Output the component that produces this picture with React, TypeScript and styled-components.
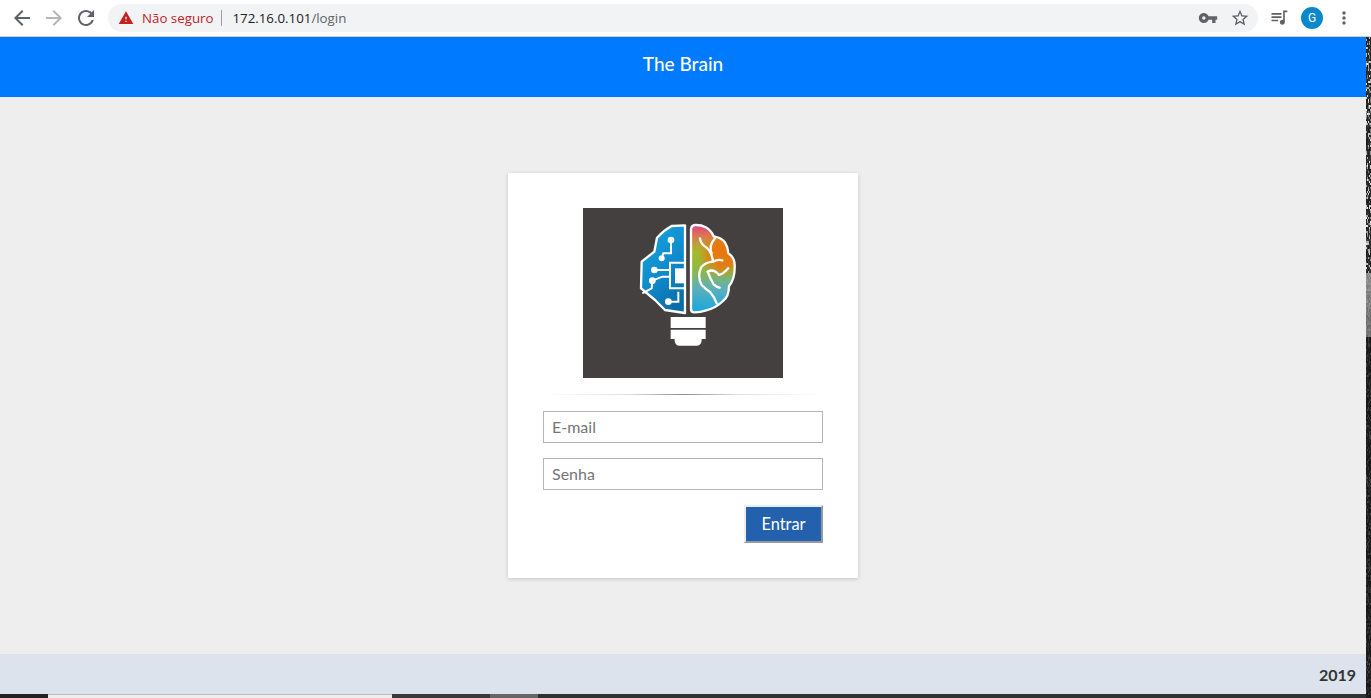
import React from "react";
import styled, { createGlobalStyle } from "styled-components";

const Global = createGlobalStyle`
  html, body { margin: 0; padding: 0; height: 100%; background: #fff; overflow: hidden; }
  * { box-sizing: border-box; }
`;

const Screen = styled.div`
  width: 1371px;
  height: 698px;
  display: flex;
  flex-direction: column;
  overflow: hidden;
  font-family: Lato, "Liberation Sans", sans-serif;
`;

const Toolbar = styled.header`
  height: 37px;
  flex: none;
  display: flex;
  align-items: center;
  background: #fff;
  border-bottom: 1px solid #d0d0d0;
  padding: 0 0 1px 10px;
`;

const NavButton = styled.span<{ $muted?: boolean }>`
  width: 24px;
  height: 24px;
  margin-right: 8px;
  flex: none;
  display: flex;
  color: ${(p) => (p.$muted ? "#b4b6b8" : "#5f6368")};
`;

const Omnibox = styled.div`
  width: 1150px;
  height: 28px;
  margin-left: 2px;
  border-radius: 14px;
  background: #f1f3f4;
  display: flex;
  align-items: center;
  padding: 0 8px 0 10px;
  font-family: "Open Sans", "Noto Sans", sans-serif;
  font-size: 13.3px;
`;

const WarningMark = styled.span`
  width: 16px;
  height: 16px;
  flex: none;
  display: flex;
  color: #c5221f;
`;

const SecurityLabel = styled.span`
  margin-left: 8px;
  color: #c5221f;
`;

const Separator = styled.span`
  width: 1px;
  height: 16px;
  margin: 0 10px 0 8px;
  background: #9aa0a6;
`;

const Url = styled.span`
  color: #5f6368;
  b { font-weight: 400; color: #202124; }
`;

const OmniActions = styled.div`
  margin-left: auto;
  display: flex;
  gap: 12px;
`;

const SmallIcon = styled.span`
  width: 20px;
  height: 20px;
  display: flex;
  color: #5f6368;
`;

const ToolbarEnd = styled.div`
  display: flex;
  align-items: center;
  margin-left: 11px;
`;

const Avatar = styled.span`
  width: 22px;
  height: 22px;
  margin-left: 12px;
  border-radius: 50%;
  background: #0b87cb;
  color: #fff;
  font: 400 12px Roboto, sans-serif;
  display: flex;
  align-items: center;
  justify-content: center;
`;

const Kebab = styled.span`
  width: 20px;
  height: 20px;
  margin-left: 11px;
  display: flex;
  color: #5f6368;
`;

const Viewport = styled.div`
  flex: 1;
  min-height: 0;
  display: flex;
`;

const Page = styled.div`
  width: 1366px;
  flex: none;
  display: flex;
  flex-direction: column;
`;

const Banner = styled.div`
  height: 60px;
  flex: none;
  background: #007bff;
  color: #fff;
  font-size: 19px;
  font-weight: 500;
  display: flex;
  align-items: center;
  justify-content: center;
  padding-bottom: 7px;
`;

const Main = styled.main`
  flex: 1;
  background: #eee;
  display: flex;
  justify-content: center;
  padding-top: 76px;
`;

const Card = styled.form`
  width: 350px;
  height: 405px;
  background: #fff;
  box-shadow: 0 1px 4px rgba(0, 0, 0, 0.18);
  padding: 35px;
  display: flex;
  flex-direction: column;
  align-items: center;
`;

const LogoSvg = styled.svg`
  display: block;
  flex: none;
  width: 200px;
  height: 170px;
  background: #444040;
`;

const Rule = styled.div`
  width: 280px;
  height: 1px;
  flex: none;
  margin: 16px 0;
  background: linear-gradient(to right, rgba(0,0,0,0) 1%, rgba(0,0,0,0.12) 30%, rgba(0,0,0,0.45) 50%, rgba(0,0,0,0.12) 70%, rgba(0,0,0,0) 99%);
`;

const Field = styled.input`
  width: 280px;
  height: 32px;
  flex: none;
  margin-bottom: 15px;
  padding: 0 8px 2px;
  border: 1px solid #b5b5b5;
  border-radius: 0;
  outline: none;
  background: #fff;
  color: #333;
  font: 400 16px Lato, sans-serif;
  &::placeholder { color: #757575; opacity: 1; }
`;

const Actions = styled.div`
  width: 280px;
  display: flex;
  justify-content: flex-end;
`;

const Submit = styled.button`
  width: 79px;
  height: 38px;
  padding: 0 0 2px;
  background: #2360ad;
  color: #fff;
  font: 400 16.4px Lato, sans-serif;
  border: 2px solid;
  border-color: #eeeeee #999999 #999999 #eeeeee;
`;

const Footer = styled.footer`
  height: 40px;
  flex: none;
  background: #dce3ec;
  color: #333;
  font-size: 16px;
  font-weight: 700;
  display: flex;
  align-items: center;
  justify-content: flex-end;
  padding-right: 10px;
`;

const Taskbar = styled.div`
  height: 4px;
  flex: none;
  display: flex;
  background: #2f3132;
`;

const TaskSlot = styled.span<{ $w: number; $bg: string; $edge?: boolean }>`
  width: ${(p) => p.$w}px;
  flex: none;
  background: ${(p) => p.$bg};
  border-top: ${(p) => (p.$edge ? "1px solid #bbb" : "none")};
`;

const Wallpaper = styled.svg`
  width: 5px;
  flex: none;
  display: block;
  background: #1c1c1c;
`;

const Icon = ({ d }: { d: string }) => (
  <svg viewBox="0 0 24 24" width="100%" height="100%" fill="currentColor"><path d={d} /></svg>
);

const ARROW = "M20 11H7.83l5.59-5.59L12 4l-8 8 8 8 1.41-1.41L7.83 13H20v-2z";
const ARROW_F = "M4 11h12.17l-5.59-5.59L12 4l8 8-8 8-1.41-1.41L16.17 13H4v-2z";
const RELOAD = "M17.65 6.35C16.2 4.9 14.21 4 12 4c-4.42 0-7.99 3.58-7.99 8s3.57 8 7.99 8c3.73 0 6.84-2.55 7.73-6h-2.08c-.82 2.33-3.04 4-5.65 4-3.31 0-6-2.69-6-6s2.69-6 6-6c1.66 0 3.14.69 4.22 1.78L13 11h7V4l-2.35 2.35z";
const WARN = "M1 21h22L12 2 1 21zm12-3h-2v-2h2v2zm0-4h-2v-4h2v4z";
const KEY = "M12.65 10C11.83 7.67 9.61 6 7 6c-3.31 0-6 2.69-6 6s2.69 6 6 6c2.61 0 4.83-1.67 5.65-4H17v4h4v-4h2v-4H12.65zM7 14c-1.1 0-2-.9-2-2s.9-2 2-2 2 .9 2 2-.9 2-2 2z";
const STAR = "M22 9.24l-7.19-.62L12 2 9.19 8.63 2 9.24l5.46 4.73L5.82 21 12 17.27 18.18 21l-1.63-7.03L22 9.24zM12 15.4l-3.76 2.27 1-4.28-3.32-2.88 4.38-.38L12 6.1l1.71 4.04 4.38.38-3.32 2.88 1 4.28L12 15.4z";
const QUEUE = "M15 6H3v2h12V6zm0 4H3v2h12v-2zM3 16h8v-2H3v2zM17 3v11.18c-.31-.11-.65-.18-1-.18-1.66 0-3 1.34-3 3s1.34 3 3 3 3-1.34 3-3V5h3V3h-5z";
const DOTS = "M12 8c1.1 0 2-.9 2-2s-.9-2-2-2-2 .9-2 2 .9 2 2 2zm0 2c-1.1 0-2 .9-2 2s.9 2 2 2 2-.9 2-2-.9-2-2-2zm0 6c-1.1 0-2 .9-2 2s.9 2 2 2 2-.9 2-2-.9-2-2-2z";

const RIGHT_LOBE = "M204 42 Q206 30 218 30 Q236 30 248 37 Q264 46 272 64 Q296 68 306 82 Q316 98 316 115 Q334 126 335 150 Q337 190 318 214 Q318 245 300 258 Q280 278 250 286 Q232 292 214 292 Q204 292 204 282 Z";

const Logo = () => (
  <LogoSvg viewBox="0 0 200 170">
    <defs>
      <linearGradient id="lb" x1="0.2" y1="0" x2="0.7" y2="1">
        <stop offset="0" stopColor="#18a3de" />
        <stop offset="0.55" stopColor="#0f8acb" />
        <stop offset="1" stopColor="#0a6ca8" />
      </linearGradient>
      <linearGradient id="rb" x1="0" y1="0" x2="0" y2="1">
        <stop offset="0" stopColor="#e33f86" />
        <stop offset="0.13" stopColor="#d97a4f" />
        <stop offset="0.3" stopColor="#a8ba2a" />
        <stop offset="0.52" stopColor="#8db944" />
        <stop offset="0.72" stopColor="#5fb0b8" />
        <stop offset="1" stopColor="#17a6e0" />
      </linearGradient>
      <radialGradient id="ro" gradientUnits="userSpaceOnUse" cx="298" cy="118" r="72">
        <stop offset="0.45" stopColor="#e8790f" stopOpacity="1" />
        <stop offset="1" stopColor="#e8790f" stopOpacity="0" />
      </radialGradient>
      <clipPath id="rc"><path d={RIGHT_LOBE} /></clipPath>
    </defs>
    <g transform="translate(40 7) scale(0.3333)">
      <path d="M186 31 L146 33 Q122 46 102 68 L94 110 L56 140 L54 220 L96 255 L126 285 L186 294 Z" fill="url(#lb)" stroke="#fff" strokeWidth="7" strokeLinejoin="round" />
      <g fill="none" stroke="#fff" strokeWidth="6">
        <path d="M144 75 V115 H121 L116 130" />
        <path d="M94 165 H141" />
        <path d="M88 197 L118 185 H141 M88 197 L86 220 L58 235" />
        <path d="M136 260 H166 V230" />
        <path d="M186 143 H141 V220 H186" />
      </g>
      <g fill="#fff">
        <circle cx="144" cy="75" r="10" />
        <circle cx="116" cy="130" r="9" />
        <circle cx="94" cy="165" r="10" />
        <circle cx="88" cy="197" r="10" />
        <circle cx="136" cy="260" r="10" />
        <rect x="156" y="160" width="30" height="45" />
      </g>
      <path d={RIGHT_LOBE} fill="url(#rb)" />
      <rect x="204" y="30" width="132" height="262" fill="url(#ro)" clipPath="url(#rc)" />
      <path d={RIGHT_LOBE} fill="none" stroke="#fff" strokeWidth="7" strokeLinejoin="round" />
      <g fill="none" stroke="#fff" strokeWidth="7" strokeLinecap="round" strokeLinejoin="round">
        <path d="M231 70 Q234 88 248 96 Q266 108 270 140 Q245 142 234 158 Q222 185 236 210 Q250 224 262 232 Q274 246 281 265" />
        <path d="M266 115 Q256 94 276 70" />
        <path d="M270 140 Q284 132 298 136" />
        <path d="M254 170 Q272 160 288 180 Q300 178 316 160" />
        <path d="M254 170 Q262 192 272 208 Q280 216 290 218" />
      </g>
      <rect x="143" y="306" width="105" height="33" fill="#fff" />
      <path d="M143 344 H248 V372 H236 V378 Q234 392 220 392 H170 Q157 392 155 378 V372 H143 Z" fill="#fff" />
    </g>
  </LogoSvg>
);

const noise = (() => {
  const out: { x: number; y: number; h: number; c: string }[] = [];
  let s = 1337;
  const r = () => { s = (s * 16807) % 2147483647; return s / 2147483647; };
  for (let y = 0; y < 657; y += 2) {
    for (let x = 0; x < 5; x += 1) {
      const v = r();
      let g: number;
      if (y < 200) {
        g = v > 0.65 ? Math.floor(110 + r() * 130) : Math.floor(20 + r() * 40);
      } else if (y < 235) {
        g = v > 0.7 ? Math.floor(150 + r() * 90) : Math.floor(20 + r() * 50);
      } else if (y < 300) {
        g = Math.floor(125 + r() * 40 - (y - 235) * 0.5);
      } else {
        g = v > 0.7 ? Math.floor(40 + r() * 30) : Math.floor(20 + r() * 15);
      }
      out.push({ x, y, h: 2, c: `rgb(${g},${g},${g})` });
    }
  }
  return out;
})();

export default function App() {
  return (
    <Screen>
      <Global />
      <Toolbar>
        <NavButton><Icon d={ARROW} /></NavButton>
        <NavButton $muted><Icon d={ARROW_F} /></NavButton>
        <NavButton><Icon d={RELOAD} /></NavButton>
        <Omnibox>
          <WarningMark><Icon d={WARN} /></WarningMark>
          <SecurityLabel>Não seguro</SecurityLabel>
          <Separator />
          <Url><b>172.16.0.101</b>/login</Url>
          <OmniActions>
            <SmallIcon><Icon d={KEY} /></SmallIcon>
            <SmallIcon><Icon d={STAR} /></SmallIcon>
          </OmniActions>
        </Omnibox>
        <ToolbarEnd>
          <SmallIcon><Icon d={QUEUE} /></SmallIcon>
          <Avatar>G</Avatar>
          <Kebab><Icon d={DOTS} /></Kebab>
        </ToolbarEnd>
      </Toolbar>
      <Viewport>
        <Page>
          <Banner>The Brain</Banner>
          <Main>
            <Card onSubmit={(e) => e.preventDefault()}>
              <Logo />
              <Rule />
              <Field type="email" placeholder="E-mail" />
              <Field type="password" placeholder="Senha" />
              <Actions><Submit type="submit">Entrar</Submit></Actions>
            </Card>
          </Main>
          <Footer>2019</Footer>
          <Taskbar>
            <TaskSlot $w={48} $bg="#222" />
            <TaskSlot $w={344} $bg="#eee" $edge />
            <TaskSlot $w={98} $bg="#3a3a3a" />
            <TaskSlot $w={48} $bg="#666" />
          </Taskbar>
        </Page>
        <Wallpaper viewBox="0 0 5 661" preserveAspectRatio="none">
          {noise.map((n, i) => (
            <rect key={i} x={n.x} y={n.y} width={1} height={n.h} fill={n.c} />
          ))}
        </Wallpaper>
      </Viewport>
    </Screen>
  );
}
